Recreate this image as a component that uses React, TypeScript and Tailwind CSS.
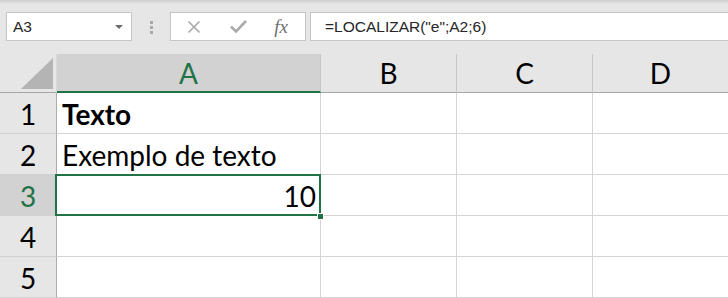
import React from "react";

const cellText = "font-['Lato',sans-serif] text-[28px] leading-[28px] text-black";

function RowHeader({ n, selected }: { n: number; selected?: boolean }) {
  return (
    <div
      className={
        "flex items-end justify-center pb-[5px] border-r border-r-[#ababab] border-b border-b-[#d0d0d0] " +
        (selected ? "bg-[#d2d2d2] text-[#217346]" : "bg-[#e6e6e6] text-black") +
        " font-['Lato',sans-serif] text-[28px] leading-[28px]"
      }
    >
      {n}
    </div>
  );
}

function Cell({
  children,
  last,
  className = "",
}: {
  children?: React.ReactNode;
  last?: boolean;
  className?: string;
}) {
  return (
    <div
      className={
        "relative flex items-end pb-[5px] bg-white border-b border-b-[#d4d4d4] " +
        (last ? "" : "border-r border-r-[#d4d4d4] ") +
        cellText +
        " " +
        className
      }
    >
      {children}
    </div>
  );
}

export default function App() {
  return (
    <div className="w-[728px] h-[298px] overflow-hidden bg-[#e6e6e6] select-none">
      {/* Toolbar */}
      <div className="relative h-[54px] bg-[#e6e6e6]">
        <div className="absolute inset-x-0 top-0 h-[4px] bg-gradient-to-b from-[#cfcfcf] to-[#e6e6e6]" />
        <div className="flex items-start pt-[12px] pl-[6px]">
          {/* Name box */}
          <div className="flex items-center justify-between w-[126px] h-[29px] bg-white border border-[#c6c6c6] pl-[6px] pr-[8px]">
            <span className="font-['Liberation_Sans',Arial,sans-serif] text-[15.5px] text-[#262626] leading-none">
              A3
            </span>
            <svg width="8" height="4" viewBox="0 0 8 4">
              <path d="M0 0 L8 0 L4 4 Z" fill="#6b6b6b" />
            </svg>
          </div>
          {/* Separator dots */}
          <div className="flex w-[38px] h-[29px] items-center justify-center">
            <div className="flex flex-col gap-[2px] pt-[1px]">
              <div className="w-[3px] h-[3px] bg-[#a9a9a9]" />
              <div className="w-[3px] h-[3px] bg-[#a9a9a9]" />
              <div className="w-[3px] h-[3px] bg-[#a9a9a9]" />
            </div>
          </div>
          {/* Buttons */}
          <div className="flex items-center w-[136px] h-[29px] bg-white border border-[#c6c6c6]">
            <div className="w-[44px] flex justify-center pl-[2px]">
              <svg width="14" height="14" viewBox="0 0 14 14">
                <path d="M1.5 1.5 L12.5 12.5 M12.5 1.5 L1.5 12.5" stroke="#a8a8a8" strokeWidth="1.6" fill="none" />
              </svg>
            </div>
            <div className="w-[46px] flex justify-center">
              <svg width="17" height="13" viewBox="0 0 17 13">
                <path d="M1 6.5 L6 11.5 L16 1" stroke="#ababab" strokeWidth="2.6" fill="none" />
              </svg>
            </div>
            <div className="w-[44px] flex justify-center">
              <span className="font-['Liberation_Serif',serif] italic text-[19px] leading-none text-[#6f6f6f] pr-[4px]">
                fx
              </span>
            </div>
          </div>
          {/* Formula input */}
          <div className="flex items-center ml-[4px] flex-1 h-[29px] bg-white border border-[#c6c6c6] border-r-0 pl-[14px]">
            <span className="font-['Liberation_Sans',Arial,sans-serif] text-[15.5px] text-[#262626] leading-none">
              =LOCALIZAR("e";A2;6)
            </span>
          </div>
        </div>
      </div>

      {/* Grid */}
      <div className="grid grid-cols-[57px_264px_136px_136px_1fr] grid-rows-[39px_41px_41px_41px_41px_41px]">
        {/* Header row */}
        <div className="relative bg-[#e6e6e6] border-b border-b-[#a6a6a6] border-r border-r-[#dadada]">
          <svg className="absolute left-[21px] top-[4px]" width="33" height="32" viewBox="0 0 33 32">
            <path d="M0 31 L32 0 L32 31 Z" fill="#b4b4b4" />
          </svg>
        </div>
        <div className="flex items-end justify-center pb-[4px] bg-[#d2d2d2] border-b-2 border-b-[#217346] border-r border-r-[#c6c6c6] font-['Lato',sans-serif] text-[28px] leading-[28px] text-[#217346]">
          A
        </div>
        <div className="flex items-end justify-center pb-[5px] bg-[#e6e6e6] border-b border-b-[#a6a6a6] border-r border-r-[#c6c6c6] font-['Lato',sans-serif] text-[28px] leading-[28px] text-black">
          B
        </div>
        <div className="flex items-end justify-center pb-[5px] bg-[#e6e6e6] border-b border-b-[#a6a6a6] border-r border-r-[#c6c6c6] font-['Lato',sans-serif] text-[28px] leading-[28px] text-black">
          C
        </div>
        <div className="flex items-end justify-center pb-[5px] bg-[#e6e6e6] border-b border-b-[#a6a6a6] font-['Lato',sans-serif] text-[28px] leading-[28px] text-black">
          D
        </div>

        {/* Row 1 */}
        <RowHeader n={1} />
        <Cell className="pl-[5px] font-bold">Texto</Cell>
        <Cell />
        <Cell />
        <Cell last />

        {/* Row 2 */}
        <RowHeader n={2} />
        <Cell className="pl-[5px]">Exemplo de texto</Cell>
        <Cell />
        <Cell />
        <Cell last />

        {/* Row 3 */}
        <RowHeader n={3} selected />
        <Cell className="justify-end pr-[4px] z-10">
          10
          <div className="absolute -left-[2px] -top-[1px] -right-[1px] -bottom-[1px] border-2 border-[#217346] pointer-events-none" />
          <div className="absolute left-[260px] top-[38px] w-[7px] h-[7px] bg-[#217346] border border-white z-20" />
        </Cell>
        <Cell />
        <Cell />
        <Cell last />

        {/* Row 4 */}
        <RowHeader n={4} />
        <Cell />
        <Cell />
        <Cell />
        <Cell last />

        {/* Row 5 */}
        <RowHeader n={5} />
        <Cell />
        <Cell />
        <Cell />
        <Cell last />
      </div>
    </div>
  );
}
